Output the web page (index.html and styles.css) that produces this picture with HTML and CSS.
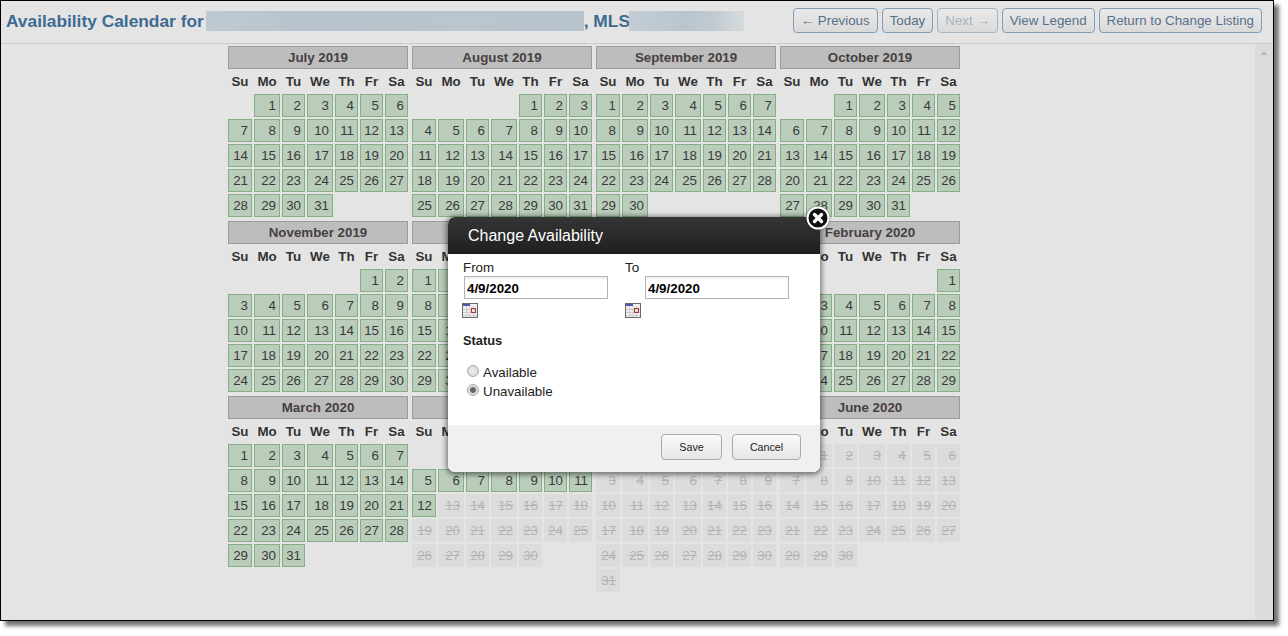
FILE: index.html
```html
<!DOCTYPE html>
<html lang="en">
<head>
<meta charset="utf-8">
<title>Availability Calendar</title>
<link rel="stylesheet" href="styles.css">
</head>
<body>
<div class="frame">
  <header class="topbar">
    <h1 class="title">Availability Calendar for<span class="blur blur-name"></span>, MLS<span class="blur blur-mls"></span></h1>
    <nav class="actions">
      <button class="btn">← Previous</button>
      <button class="btn">Today</button>
      <button class="btn btn-off">Next →</button>
      <button class="btn">View Legend</button>
      <button class="btn">Return to Change Listing</button>
    </nav>
  </header>
  <div class="content">
    <main class="calendars">
      <section class="month"><h2>July 2019</h2><table><tr><th>Su</th><th>Mo</th><th>Tu</th><th>We</th><th>Th</th><th>Fr</th><th>Sa</th></tr>
        <tr><td></td><td>1</td><td>2</td><td>3</td><td>4</td><td>5</td><td>6</td></tr>
        <tr><td>7</td><td>8</td><td>9</td><td>10</td><td>11</td><td>12</td><td>13</td></tr>
        <tr><td>14</td><td>15</td><td>16</td><td>17</td><td>18</td><td>19</td><td>20</td></tr>
        <tr><td>21</td><td>22</td><td>23</td><td>24</td><td>25</td><td>26</td><td>27</td></tr>
        <tr><td>28</td><td>29</td><td>30</td><td>31</td><td></td><td></td><td></td></tr></table></section>
      <section class="month"><h2>August 2019</h2><table><tr><th>Su</th><th>Mo</th><th>Tu</th><th>We</th><th>Th</th><th>Fr</th><th>Sa</th></tr>
        <tr><td></td><td></td><td></td><td></td><td>1</td><td>2</td><td>3</td></tr>
        <tr><td>4</td><td>5</td><td>6</td><td>7</td><td>8</td><td>9</td><td>10</td></tr>
        <tr><td>11</td><td>12</td><td>13</td><td>14</td><td>15</td><td>16</td><td>17</td></tr>
        <tr><td>18</td><td>19</td><td>20</td><td>21</td><td>22</td><td>23</td><td>24</td></tr>
        <tr><td>25</td><td>26</td><td>27</td><td>28</td><td>29</td><td>30</td><td>31</td></tr></table></section>
      <section class="month"><h2>September 2019</h2><table><tr><th>Su</th><th>Mo</th><th>Tu</th><th>We</th><th>Th</th><th>Fr</th><th>Sa</th></tr>
        <tr><td>1</td><td>2</td><td>3</td><td>4</td><td>5</td><td>6</td><td>7</td></tr>
        <tr><td>8</td><td>9</td><td>10</td><td>11</td><td>12</td><td>13</td><td>14</td></tr>
        <tr><td>15</td><td>16</td><td>17</td><td>18</td><td>19</td><td>20</td><td>21</td></tr>
        <tr><td>22</td><td>23</td><td>24</td><td>25</td><td>26</td><td>27</td><td>28</td></tr>
        <tr><td>29</td><td>30</td><td></td><td></td><td></td><td></td><td></td></tr></table></section>
      <section class="month"><h2>October 2019</h2><table><tr><th>Su</th><th>Mo</th><th>Tu</th><th>We</th><th>Th</th><th>Fr</th><th>Sa</th></tr>
        <tr><td></td><td></td><td>1</td><td>2</td><td>3</td><td>4</td><td>5</td></tr>
        <tr><td>6</td><td>7</td><td>8</td><td>9</td><td>10</td><td>11</td><td>12</td></tr>
        <tr><td>13</td><td>14</td><td>15</td><td>16</td><td>17</td><td>18</td><td>19</td></tr>
        <tr><td>20</td><td>21</td><td>22</td><td>23</td><td>24</td><td>25</td><td>26</td></tr>
        <tr><td>27</td><td>28</td><td>29</td><td>30</td><td>31</td><td></td><td></td></tr></table></section>
      <section class="month"><h2>November 2019</h2><table><tr><th>Su</th><th>Mo</th><th>Tu</th><th>We</th><th>Th</th><th>Fr</th><th>Sa</th></tr>
        <tr><td></td><td></td><td></td><td></td><td></td><td>1</td><td>2</td></tr>
        <tr><td>3</td><td>4</td><td>5</td><td>6</td><td>7</td><td>8</td><td>9</td></tr>
        <tr><td>10</td><td>11</td><td>12</td><td>13</td><td>14</td><td>15</td><td>16</td></tr>
        <tr><td>17</td><td>18</td><td>19</td><td>20</td><td>21</td><td>22</td><td>23</td></tr>
        <tr><td>24</td><td>25</td><td>26</td><td>27</td><td>28</td><td>29</td><td>30</td></tr></table></section>
      <section class="month"><h2>December 2019</h2><table><tr><th>Su</th><th>Mo</th><th>Tu</th><th>We</th><th>Th</th><th>Fr</th><th>Sa</th></tr>
        <tr><td>1</td><td>2</td><td>3</td><td>4</td><td>5</td><td>6</td><td>7</td></tr>
        <tr><td>8</td><td>9</td><td>10</td><td>11</td><td>12</td><td>13</td><td>14</td></tr>
        <tr><td>15</td><td>16</td><td>17</td><td>18</td><td>19</td><td>20</td><td>21</td></tr>
        <tr><td>22</td><td>23</td><td>24</td><td>25</td><td>26</td><td>27</td><td>28</td></tr>
        <tr><td>29</td><td>30</td><td>31</td><td></td><td></td><td></td><td></td></tr></table></section>
      <section class="month"><h2>January 2020</h2><table><tr><th>Su</th><th>Mo</th><th>Tu</th><th>We</th><th>Th</th><th>Fr</th><th>Sa</th></tr>
        <tr><td></td><td></td><td></td><td>1</td><td>2</td><td>3</td><td>4</td></tr>
        <tr><td>5</td><td>6</td><td>7</td><td>8</td><td>9</td><td>10</td><td>11</td></tr>
        <tr><td>12</td><td>13</td><td>14</td><td>15</td><td>16</td><td>17</td><td>18</td></tr>
        <tr><td>19</td><td>20</td><td>21</td><td>22</td><td>23</td><td>24</td><td>25</td></tr>
        <tr><td>26</td><td>27</td><td>28</td><td>29</td><td>30</td><td>31</td><td></td></tr></table></section>
      <section class="month"><h2>February 2020</h2><table><tr><th>Su</th><th>Mo</th><th>Tu</th><th>We</th><th>Th</th><th>Fr</th><th>Sa</th></tr>
        <tr><td></td><td></td><td></td><td></td><td></td><td></td><td>1</td></tr>
        <tr><td>2</td><td>3</td><td>4</td><td>5</td><td>6</td><td>7</td><td>8</td></tr>
        <tr><td>9</td><td>10</td><td>11</td><td>12</td><td>13</td><td>14</td><td>15</td></tr>
        <tr><td>16</td><td>17</td><td>18</td><td>19</td><td>20</td><td>21</td><td>22</td></tr>
        <tr><td>23</td><td>24</td><td>25</td><td>26</td><td>27</td><td>28</td><td>29</td></tr></table></section>
      <section class="month"><h2>March 2020</h2><table><tr><th>Su</th><th>Mo</th><th>Tu</th><th>We</th><th>Th</th><th>Fr</th><th>Sa</th></tr>
        <tr><td>1</td><td>2</td><td>3</td><td>4</td><td>5</td><td>6</td><td>7</td></tr>
        <tr><td>8</td><td>9</td><td>10</td><td>11</td><td>12</td><td>13</td><td>14</td></tr>
        <tr><td>15</td><td>16</td><td>17</td><td>18</td><td>19</td><td>20</td><td>21</td></tr>
        <tr><td>22</td><td>23</td><td>24</td><td>25</td><td>26</td><td>27</td><td>28</td></tr>
        <tr><td>29</td><td>30</td><td>31</td><td></td><td></td><td></td><td></td></tr></table></section>
      <section class="month"><h2>April 2020</h2><table><tr><th>Su</th><th>Mo</th><th>Tu</th><th>We</th><th>Th</th><th>Fr</th><th>Sa</th></tr>
        <tr><td></td><td></td><td></td><td>1</td><td>2</td><td>3</td><td>4</td></tr>
        <tr><td>5</td><td>6</td><td>7</td><td>8</td><td>9</td><td>10</td><td>11</td></tr>
        <tr><td>12</td><td class="off">13</td><td class="off">14</td><td class="off">15</td><td class="off">16</td><td class="off">17</td><td class="off">18</td></tr>
        <tr><td class="off">19</td><td class="off">20</td><td class="off">21</td><td class="off">22</td><td class="off">23</td><td class="off">24</td><td class="off">25</td></tr>
        <tr><td class="off">26</td><td class="off">27</td><td class="off">28</td><td class="off">29</td><td class="off">30</td><td></td><td></td></tr></table></section>
      <section class="month month-off"><h2>May 2020</h2><table><tr><th>Su</th><th>Mo</th><th>Tu</th><th>We</th><th>Th</th><th>Fr</th><th>Sa</th></tr>
        <tr><td></td><td></td><td></td><td></td><td></td><td>1</td><td>2</td></tr>
        <tr><td>3</td><td>4</td><td>5</td><td>6</td><td>7</td><td>8</td><td>9</td></tr>
        <tr><td>10</td><td>11</td><td>12</td><td>13</td><td>14</td><td>15</td><td>16</td></tr>
        <tr><td>17</td><td>18</td><td>19</td><td>20</td><td>21</td><td>22</td><td>23</td></tr>
        <tr><td>24</td><td>25</td><td>26</td><td>27</td><td>28</td><td>29</td><td>30</td></tr>
        <tr><td>31</td><td></td><td></td><td></td><td></td><td></td><td></td></tr></table></section>
      <section class="month month-off"><h2>June 2020</h2><table><tr><th>Su</th><th>Mo</th><th>Tu</th><th>We</th><th>Th</th><th>Fr</th><th>Sa</th></tr>
        <tr><td></td><td>1</td><td>2</td><td>3</td><td>4</td><td>5</td><td>6</td></tr>
        <tr><td>7</td><td>8</td><td>9</td><td>10</td><td>11</td><td>12</td><td>13</td></tr>
        <tr><td>14</td><td>15</td><td>16</td><td>17</td><td>18</td><td>19</td><td>20</td></tr>
        <tr><td>21</td><td>22</td><td>23</td><td>24</td><td>25</td><td>26</td><td>27</td></tr>
        <tr><td>28</td><td>29</td><td>30</td><td></td><td></td><td></td><td></td></tr></table></section>
    </main>
    <div class="scrollbar"><span class="scroll-up"></span></div>
  </div>
</div>

<div class="modal" role="dialog">
  <span class="close">
    <svg viewBox="0 0 24 24" width="24" height="24"><circle cx="12" cy="12" r="10.5" fill="#111" stroke="#fff" stroke-width="2"/><path d="M8.500 8.500 15.500 15.500M15.500 8.500 8.500 15.500" stroke="#fff" stroke-width="3.4" stroke-linecap="round"/></svg>
  </span>
  <div class="modal-title">Change Availability</div>
  <div class="modal-body">
    <div class="dates">
      <div class="field">
        <label class="field-label">From</label>
        <input class="date-input" type="text" value="4/9/2020">
        <svg class="cal-icon" viewBox="0 0 16 15" width="16" height="15"><rect width="16" height="15" fill="#6a6a6a"/><rect x="1" y="1" width="14" height="13" fill="#efefef"/><rect x="1" y="1" width="7" height="2" fill="#5454b0"/><path d="M1 6.500H15M1 9.500H15M1 12.500H15M4.500 3V14M8 3V14M11.500 3V14" stroke="#cfcfcf" stroke-width="1"/><rect x="9.500" y="5.500" width="4" height="4" fill="#ddd" stroke="#a33"/></svg>
      </div>
      <div class="field">
        <label class="field-label">To</label>
        <input class="date-input" type="text" value="4/9/2020">
        <svg class="cal-icon" viewBox="0 0 16 15" width="16" height="15"><rect width="16" height="15" fill="#6a6a6a"/><rect x="1" y="1" width="14" height="13" fill="#efefef"/><rect x="1" y="1" width="7" height="2" fill="#5454b0"/><path d="M1 6.500H15M1 9.500H15M1 12.500H15M4.500 3V14M8 3V14M11.500 3V14" stroke="#cfcfcf" stroke-width="1"/><rect x="9.500" y="5.500" width="4" height="4" fill="#ddd" stroke="#a33"/></svg>
      </div>
    </div>
    <div class="status-label">Status</div>
    <div class="radios">
      <div class="radio-row"><span class="radio"></span>Available</div>
      <div class="radio-row"><span class="radio radio-on"></span>Unavailable</div>
    </div>
  </div>
  <div class="modal-foot">
    <button class="foot-btn foot-save">Save</button>
    <button class="foot-btn foot-cancel">Cancel</button>
  </div>
</div>
</body>
</html>
```
FILE: styles.css
```css
* { box-sizing: border-box; }
html, body { margin: 0; padding: 0; }
body {
  width: 1288px;
  height: 636px;
  overflow: hidden;
  background: #fff;
  font-family: "Liberation Sans", Arial, sans-serif;
  position: relative;
}
.frame {
  width: 1274px;
  height: 621px;
  border: 1px solid #000;
  background: #e4e4e4;
  box-shadow: 5px 5px 4px rgba(0, 0, 0, .55);
  display: flex;
  flex-direction: column;
}
.topbar {
  height: 43px;
  flex: none;
  border-bottom: 1px solid #c9c9c9;
  display: flex;
  align-items: flex-start;
  justify-content: space-between;
  padding: 7px 10px 0 5px;
}
.title {
  margin: 3px 0 0;
  font-size: 17.33px;
  line-height: 20px;
  font-weight: bold;
  color: #3e6b92;
  display: flex;
  white-space: nowrap;
}
.blur { display: block; height: 20px; }
.blur-name {
  width: 378px;
  margin-left: 2px;
  background: linear-gradient(90deg, #bfc9d2, #b7c2cc 30%, #bac5ce 70%, #b6c2cc);
}
.blur-mls {
  width: 115px;
  margin-left: -1px;
  background: linear-gradient(90deg, #c3ccd4, #b9c5ce 50%, #bfc9d1 70%, #d6dadd);
}
.actions { display: flex; gap: 4px; margin-right: 1px; }
.btn {
  height: 25px;
  padding: 0 7px;
  font: 13.33px "Liberation Sans", Arial, sans-serif;
  color: #56708a;
  border: 1px solid #7f9db9;
  border-radius: 4px;
  background: linear-gradient(#e9e9e9, #dadada);
}
.btn-off { color: #a9b2ba; border-color: #a6b4c0; }
.content { flex: 1; display: flex; min-height: 0; }
.calendars {
  flex: 1;
  padding: 2px 0 0 227px;
  display: grid;
  grid-template-columns: repeat(4, 180px);
  column-gap: 4px;
  row-gap: 2px;
  align-content: start;
}
.month h2 {
  margin: 0;
  height: 23px;
  font-size: 13.33px;
  line-height: 21px;
  font-weight: bold;
  text-align: center;
  color: #474040;
  background: #bdbdbd;
  border: 1px solid #9b9b9b;
}
.month table {
  width: 184px;
  margin: 0 -2px;
  table-layout: fixed;
  border-collapse: separate;
  border-spacing: 2px;
  font-size: 13.33px;
}
.month th {
  width: 23px;
  height: 21px;
  padding: 0;
  font-weight: bold;
  text-align: center;
  color: #333;
}
.month th:nth-child(1) { width: 24px; }
.month th:nth-child(2), .month th:nth-child(4) { width: 26px; }
.month td {
  height: 23px;
  padding: 0 3px;
  text-align: right;
  color: #3a3a3a;
  background: #bacdba;
  border: 1px solid #85ae85;
}
.month td:empty { background: none; border: 0; }
.month td.off, .month-off td {
  background: #dcdcdc;
  border-color: #dcdcdc;
  color: #b4b4b4;
  text-decoration: line-through;
}
.month-off td:empty { background: none; }
.scrollbar {
  width: 18px;
  flex: none;
  background: #dcdcdc;
  display: flex;
  justify-content: center;
  padding-top: 7px;
}
.scroll-up {
  width: 0;
  height: 0;
  border-left: 4px solid transparent;
  border-right: 4px solid transparent;
  border-bottom: 4px solid #bdbdbd;
}
.modal {
  position: absolute;
  left: 448px;
  top: 217px;
  width: 372px;
  height: 255px;
  background: #fff;
  border-radius: 7px;
  box-shadow: 0 1px 5px 2px rgba(0, 0, 0, .45);
  display: flex;
  flex-direction: column;
}
.close {
  position: absolute;
  left: 358px;
  top: -11px;
  width: 24px;
  height: 24px;
  filter: drop-shadow(0 0 1px rgba(0,0,0,.5));
}
.close svg { display: block; }
.modal-title {
  height: 37px;
  flex: none;
  padding: 9px 0 0 20px;
  font-size: 16px;
  line-height: 20px;
  color: #fff;
  border-radius: 7px 7px 0 0;
  background: linear-gradient(#353535, #1f1f1f);
}
.modal-body { flex: 1; padding: 6px 0 0 15px; font-size: 13.33px; color: #222; }
.dates { display: flex; }
.field { width: 162px; display: flex; flex-direction: column; align-items: flex-start; }
.field-label { line-height: 16px; }
.date-input {
  width: 144px;
  height: 23px;
  margin-left: 1px;
  padding: 1px 2px 0;
  border: 1px solid #b4b4b4;
  box-shadow: inset 0 2px 2px rgba(0,0,0,.06);
  font: bold 13.33px "Liberation Sans", Arial, sans-serif;
  color: #000;
  outline: 0;
}
.field + .field .date-input { margin-left: 20px; }
.cal-icon { margin: 4px 0 0 -1px; display: block; }
.field + .field .cal-icon { margin-left: 0; }
.status-label { margin-top: 15px; font-weight: bold; line-height: 16px; font-size: 12.8px; }
.radios { margin-top: 14px; padding-left: 4px; }
.radio-row { display: flex; align-items: center; gap: 4px; height: 19px; }
.radio {
  width: 12px;
  height: 12px;
  margin-top: -3px;
  border-radius: 50%;
  border: 1px solid #aaa;
  background: radial-gradient(#eee, #d4d4d4);
}
.radio-on { background: radial-gradient(#666 0 2.500px, #ddd 3.500px); }
.modal-foot {
  height: 47px;
  flex: none;
  background: #f0f0f0;
  border-radius: 0 0 7px 7px;
  display: flex;
  justify-content: flex-end;
  gap: 10px;
  padding: 9px 19px 0 0;
}
.foot-btn {
  height: 26px;
  padding-top: 1px;
  border: 1px solid #aaa;
  border-radius: 4px;
  background: linear-gradient(#fafafa, #e6e6e6);
  font: 10.67px "Liberation Sans", Arial, sans-serif;
  color: #222;
}
.foot-save { width: 61px; }
.foot-cancel { width: 69px; }
```
